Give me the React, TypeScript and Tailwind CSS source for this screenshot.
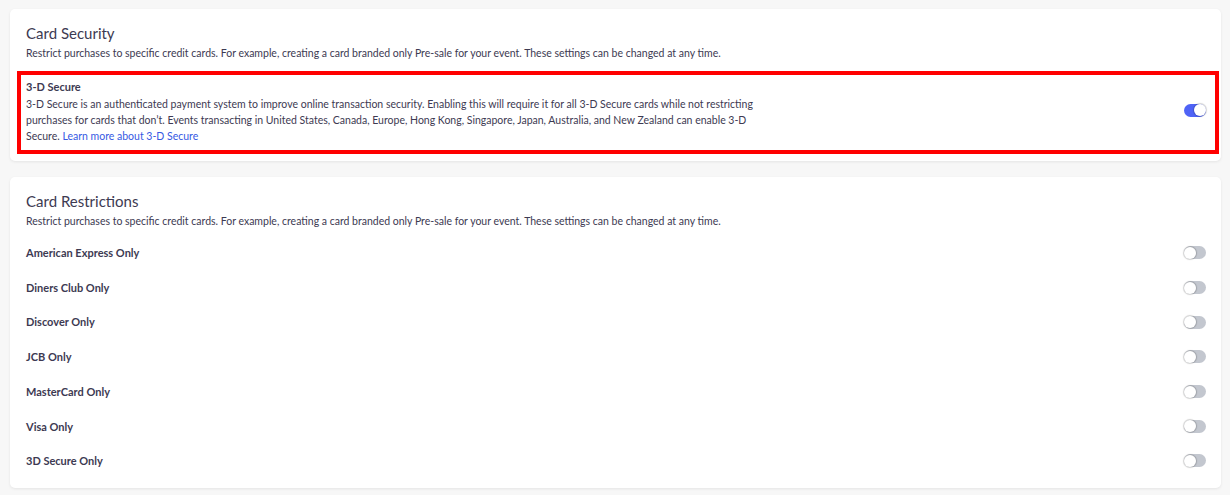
import { useState } from 'react'

const restrictions = [
  'American Express Only',
  'Diners Club Only',
  'Discover Only',
  'JCB Only',
  'MasterCard Only',
  'Visa Only',
  '3D Secure Only',
]

const blurb =
  'Restrict purchases to specific credit cards. For example, creating a card branded only Pre-sale for your event. These settings can be changed at any time.'

function Toggle({ on, onChange }: { on: boolean; onChange: () => void }) {
  return (
    <button
      type="button"
      onClick={onChange}
      className={`relative h-[13px] w-[22px] shrink-0 rounded-full transition-colors ${
        on ? 'bg-[#4f63f6]' : 'bg-[#c3c7cf]'
      }`}
    >
      <span
        className={`absolute top-[0.5px] h-[12px] w-[12px] rounded-full bg-white shadow-[0_0_1px_1px_rgba(0,0,0,0.18)] ${
          on ? 'left-[10px]' : 'left-0'
        }`}
      />
    </button>
  )
}

export default function App() {
  const [secure, setSecure] = useState(true)
  const [flags, setFlags] = useState<boolean[]>(restrictions.map(() => false))

  return (
    <div
      className="min-h-screen bg-[#f7f7f7] pl-[10px] pr-[9px] pt-[9px] text-[#3d3a52]"
      style={{ fontFamily: 'Lato, "Liberation Sans", sans-serif' }}
    >
      <div className="rounded-[5px] bg-white pb-[7px] pl-[7px] pr-[2px] pt-[14px] shadow-[0_1px_3px_rgba(0,0,0,0.08)]">
        <div className="pl-[9px]">
          <h2 className="text-[15px] leading-[20px]">Card Security</h2>
          <p className="mt-[1px] text-[10.5px] leading-[18px]">{blurb}</p>
        </div>
        <div className="mt-[9px] flex items-center border-[4px] border-[#ff0000] pb-[6px] pl-[5px] pr-[9px] pt-[2px]">
          <div className="w-[745px]">
            <div className="text-[11px] font-bold leading-[19px]">3-D Secure</div>
            <p className="text-[10.5px] leading-[16px]">
              3-D Secure is an authenticated payment system to improve online transaction security. Enabling this will
              require it for all 3-D Secure cards while not restricting purchases for cards that don’t. Events
              transacting in United States, Canada, Europe, Hong Kong, Singapore, Japan, Australia, and New Zealand can
              enable 3-D Secure.{' '}
              <a href="#" className="text-[#3659e3]">
                Learn more about 3-D Secure
              </a>
            </p>
          </div>
          <div className="ml-auto">
            <Toggle on={secure} onChange={() => setSecure(!secure)} />
          </div>
        </div>
      </div>

      <div className="mt-[16px] rounded-[5px] bg-white pb-[9px] pl-[16px] pr-[15px] pt-[14px] shadow-[0_1px_3px_rgba(0,0,0,0.08)]">
        <h2 className="text-[15px] leading-[20px]">Card Restrictions</h2>
        <p className="mt-[1px] text-[10.5px] leading-[18px]">{blurb}</p>
        <ul className="mt-[6px]">
          {restrictions.map((name, i) => (
            <li key={name} className="flex h-[34.7px] items-center">
              <span className="text-[11px] font-bold">{name}</span>
              <div className="ml-auto">
                <Toggle
                  on={flags[i]}
                  onChange={() => setFlags(flags.map((f, j) => (j === i ? !f : f)))}
                />
              </div>
            </li>
          ))}
        </ul>
      </div>
    </div>
  )
}
